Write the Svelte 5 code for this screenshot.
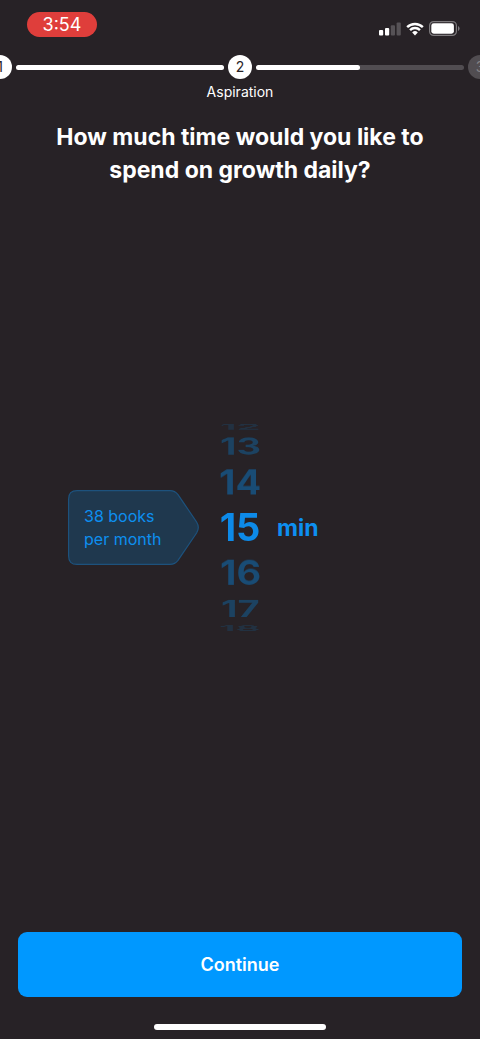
<script lang="ts">
  let minutes = $state(15);

  const step = 26;
  const current = 2;
  const steps = [
    { number: 1, label: '', progress: 100 },
    { number: 2, label: 'Aspiration', progress: 50 },
    { number: 3, label: '', progress: 0 }
  ];

  let options = $derived([-3, -2, -1, 0, 1, 2, 3].map((n) => minutes + n).filter((n) => n > 0));
  let books = $derived(Math.round(minutes * 2.5));
</script>

<div class="page">
  <header class="status">
    <span class="time">3:54</span>
    <div class="icons">
      <svg width="22" height="14" viewBox="0 0 22 14" aria-hidden="true">
        <rect x="0" y="8" width="4.2" height="5.4" rx="1" fill="#fff" />
        <rect x="6" y="6" width="4.2" height="7.4" rx="1" fill="#fff" />
        <rect x="11.8" y="3.2" width="4.2" height="10.2" rx="1" fill="#565256" />
        <rect x="17.6" y="0.4" width="4.2" height="13" rx="1" fill="#565256" />
      </svg>
      <svg width="18" height="14" viewBox="0 0 18 14" aria-hidden="true">
        <path d="M0.3 4.2 A12.4 12.4 0 0 1 17.7 4.2 L16 6 A10 10 0 0 0 2 6 Z" fill="#fff" />
        <path d="M3.2 7.2 A8.3 8.3 0 0 1 14.8 7.2 L13.1 8.9 A5.9 5.9 0 0 0 4.9 8.9 Z" fill="#fff" />
        <path d="M6.2 10.4 A4.1 4.1 0 0 1 11.8 10.4 L9 13.4 Z" fill="#fff" />
      </svg>
      <svg width="31" height="15" viewBox="0 0 31 15" aria-hidden="true">
        <rect x="0.6" y="0.6" width="26.8" height="13.8" rx="4" fill="none" stroke="#7d7a7d" stroke-width="1.2" />
        <rect x="2.3" y="2.3" width="22.6" height="10.4" rx="2.4" fill="#fff" />
        <path d="M29 5 Q30.6 5.8 30.6 7.5 Q30.6 9.2 29 10 Z" fill="#7d7a7d" />
      </svg>
    </div>
  </header>

  <ol class="steps">
    {#each steps as s, i}
      <li class="dot" class:pending={s.number > current}>
        {s.number}
        {#if s.label}<span class="label">{s.label}</span>{/if}
      </li>
      {#if i < steps.length - 1}
        <li class="track" aria-hidden="true">
          <div class="fill" style="width: {s.progress}%"></div>
        </li>
      {/if}
    {/each}
  </ol>

  <h1>How much time would you like to spend on growth daily?</h1>

  <main>
    <div class="hint">
      <svg width="131" height="75" viewBox="0 0 131 75" aria-hidden="true">
        <path
          d="M9 0.6 H102 Q107 0.6 110 4.6 L128.6 32 Q132 37.5 128.6 43 L110 70.4 Q107 74.4 102 74.4 H9 Q0.6 74.4 0.6 66 V9 Q0.6 0.6 9 0.6 Z"
          fill="#1f384e"
          stroke="#1d527d"
          stroke-width="1.2"
        />
      </svg>
      <p>{books} books<br />per month</p>
    </div>

    <div class="wheel" role="radiogroup" aria-label="Minutes per day">
      {#each options as value (value)}
        <label
          class:selected={value === minutes}
          class:far={Math.abs(value - minutes) === 2}
          class:edge={Math.abs(value - minutes) === 3}
          style="--angle: {(minutes - value) * step}deg"
        >
          <input type="radio" name="minutes" {value} bind:group={minutes} />
          {value}
        </label>
      {/each}
    </div>

    <span class="unit">min</span>
  </main>

  <button type="button">Continue</button>
  <div class="home"></div>
</div>

<style>
  :global(body) {
    margin: 0;
    background: #272226;
  }

  .page {
    display: flex;
    flex-direction: column;
    min-height: 100vh;
    box-sizing: border-box;
    overflow: hidden;
    background: #272226;
    color: #fff;
    font-family: Inter, "Liberation Sans", sans-serif;
  }

  .status {
    display: flex;
    justify-content: space-between;
    align-items: flex-start;
    padding: 12px 20px 0 27px;
  }

  .time {
    width: 70px;
    border-radius: 13px;
    background: #df3e3b;
    font-size: 18px;
    line-height: 25px;
    text-align: center;
  }

  .icons {
    display: flex;
    align-items: center;
    gap: 5px;
    padding-top: 9px;
  }

  .steps {
    display: flex;
    align-items: center;
    gap: 4px;
    margin: 18px -12px 0;
    padding: 0;
    list-style: none;
  }

  .dot {
    position: relative;
    flex: none;
    width: 24px;
    border-radius: 50%;
    background: #fff;
    color: #272226;
    font-size: 14px;
    line-height: 24px;
    text-align: center;
  }

  .dot.pending {
    background: #514d51;
    color: #858285;
  }

  .label {
    position: absolute;
    top: 100%;
    left: 50%;
    transform: translateX(-50%);
    color: #fff;
    line-height: 26px;
  }

  .track {
    flex: 1;
    height: 5px;
    border-radius: 3px;
    background: #514d51;
  }

  .fill {
    height: 100%;
    border-radius: 3px;
    background: #fff;
  }

  h1 {
    margin: 42px 40px 0;
    font-size: 23px;
    font-weight: 700;
    line-height: 33px;
    text-align: center;
  }

  main {
    display: grid;
    grid-template-columns: 1fr 42px 1fr;
    align-items: center;
    flex: 1;
    padding-bottom: 64px;
    color: #0d8ff0;
  }

  .hint {
    display: grid;
    justify-self: end;
    align-items: center;
    margin-right: 20px;
  }

  .hint svg,
  .hint p {
    grid-area: 1 / 1;
  }

  .hint p {
    margin: 0 0 0 16px;
    font-size: 16px;
    line-height: 23px;
  }

  .wheel {
    display: grid;
    align-items: center;
    justify-items: center;
    height: 206px;
    transform-style: preserve-3d;
  }

  .wheel label {
    grid-area: 1 / 1;
    color: #194c75;
    font-size: 38px;
    font-weight: 700;
    line-height: 47px;
    transform: rotateX(var(--angle)) translateZ(103px);
    cursor: pointer;
  }

  .wheel label.selected {
    color: #0d8ae8;
  }

  .wheel label.far {
    color: #1c4261;
  }

  .wheel label.edge {
    color: #223141;
  }

  .wheel input {
    position: absolute;
    opacity: 0;
    pointer-events: none;
  }

  .unit {
    margin-left: 16px;
    font-size: 23px;
    font-weight: 700;
  }

  button {
    margin: 0 18px;
    height: 65px;
    border: none;
    border-radius: 9px;
    background: #0098ff;
    color: #fff;
    font: inherit;
    font-size: 18px;
    font-weight: 600;
    cursor: pointer;
  }

  .home {
    align-self: center;
    width: 36%;
    height: 6px;
    margin: 27px 0 9px;
    border-radius: 3px;
    background: #fff;
  }
</style>
